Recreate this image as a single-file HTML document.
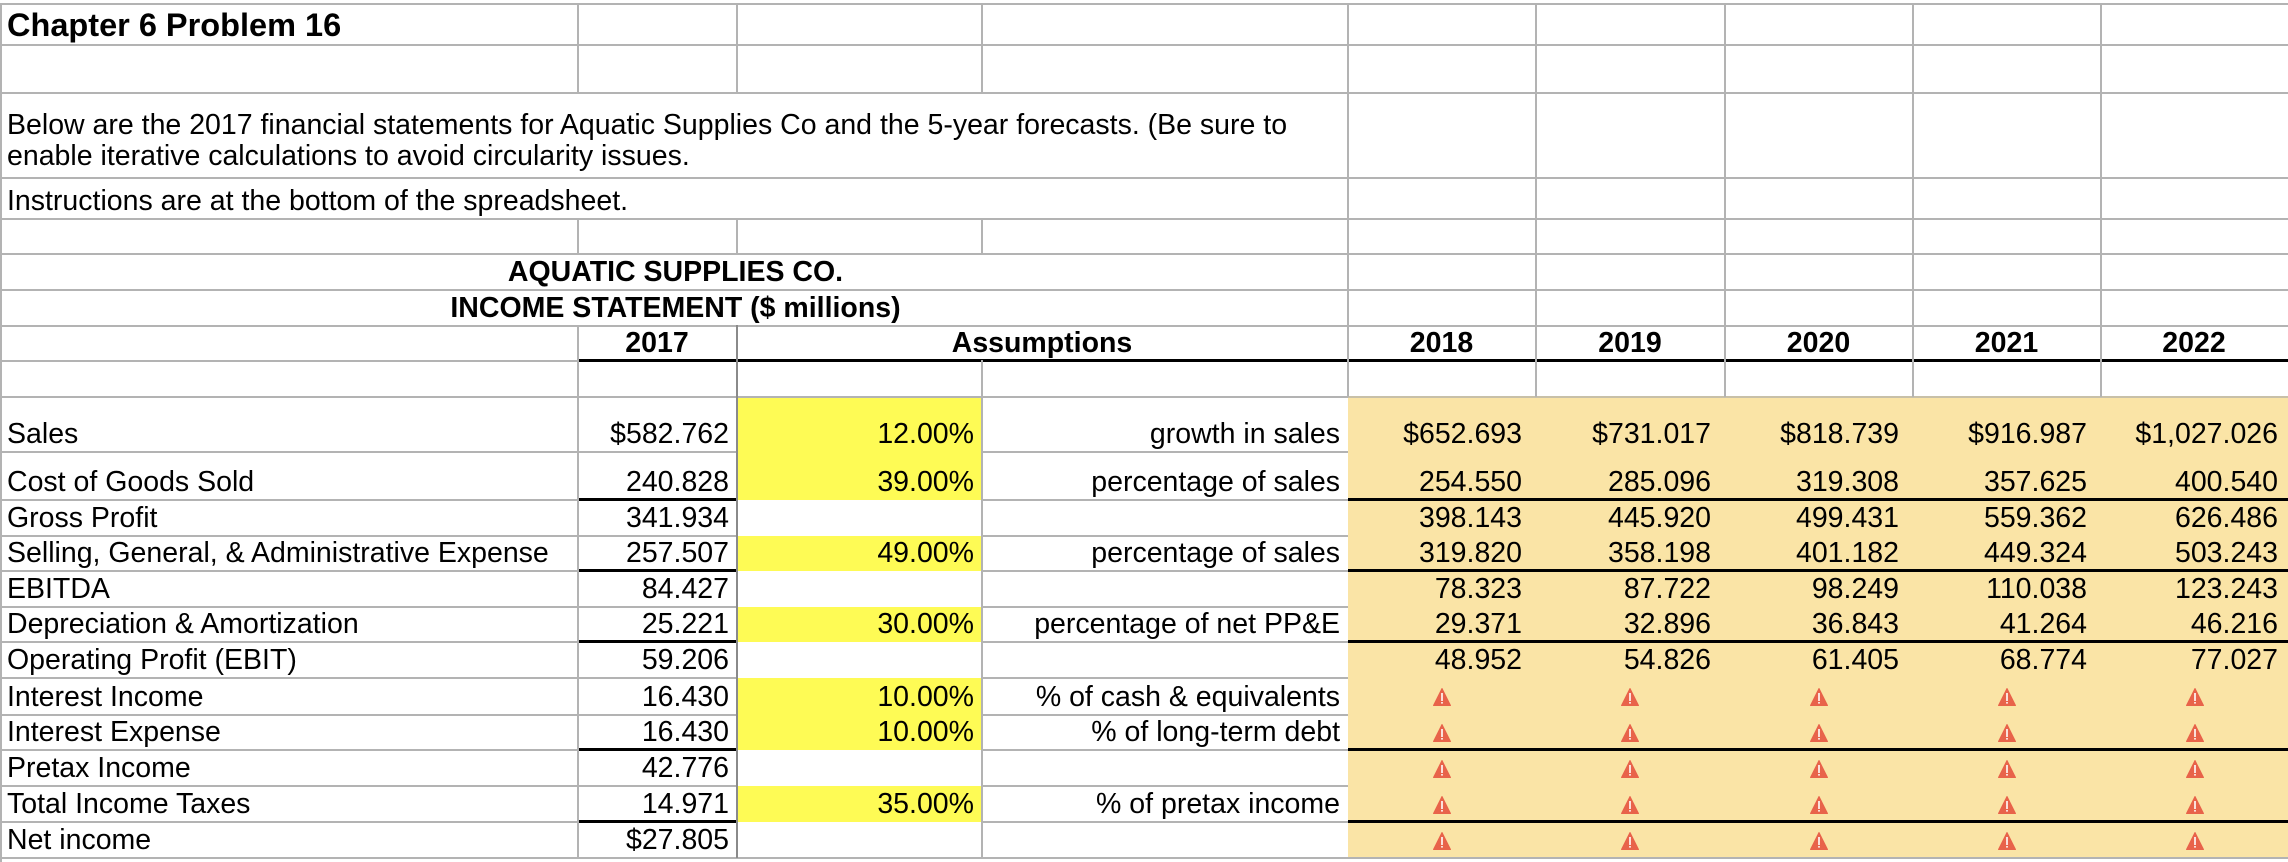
<!DOCTYPE html>
<html><head><meta charset="utf-8"><style>
body{margin:0;width:2288px;height:862px;background:#fff;position:relative;overflow:hidden;font-family:"Liberation Sans",Arial,sans-serif;color:#000}
div{position:absolute;box-sizing:border-box}
.h{height:2px;background:#b3b3b3}
.k{height:3px;background:#000}
.v{width:2px;background:#b3b3b3}
.c{display:flex;align-items:flex-end;white-space:nowrap;font-size:28.5px;line-height:30px;padding:0 8px 3px 7px}
.r{justify-content:flex-end}
.m{justify-content:center}
.b{font-weight:bold}
.y{background:#fefb55}
</style></head><body>
<div style="left:1348px;top:397px;width:940px;height:461px;background:#fae4a6"></div>
<div class="y" style="left:737px;top:397px;width:245px;height:103px"></div>
<div class="y" style="left:737px;top:536px;width:245px;height:35px"></div>
<div class="y" style="left:737px;top:607px;width:245px;height:35px"></div>
<div class="y" style="left:737px;top:678px;width:245px;height:72px"></div>
<div class="y" style="left:737px;top:786px;width:245px;height:36px"></div>

<div class="h" style="left:0;top:3px;width:2288px"></div>
<div class="h" style="left:0;top:44px;width:2288px"></div>
<div class="h" style="left:0;top:92px;width:2288px"></div>
<div class="h" style="left:0;top:177px;width:2288px"></div>
<div class="h" style="left:0;top:218px;width:2288px"></div>
<div class="h" style="left:0;top:253px;width:2288px"></div>
<div class="h" style="left:0;top:289px;width:2288px"></div>
<div class="h" style="left:0;top:325px;width:2288px"></div>
<div class="h" style="left:0;top:360px;width:578px"></div>
<div class="k" style="left:578px;top:359px;width:1710px"></div>
<div class="h" style="left:0;top:396px;width:1348px"></div>
<div class="h" style="left:1348px;top:396px;width:940px;background:#c8c0a8"></div>

<div class="h" style="left:0;top:451px;width:737px"></div><div class="h" style="left:982px;top:451px;width:366px"></div>
<div class="h" style="left:0;top:499px;width:578px"></div><div class="k" style="left:578px;top:498px;width:159px"></div><div class="h" style="left:982px;top:499px;width:366px"></div><div class="k" style="left:1348px;top:498px;width:940px"></div>
<div class="h" style="left:0;top:535px;width:737px"></div><div class="h" style="left:982px;top:535px;width:366px"></div>
<div class="h" style="left:0;top:570px;width:578px"></div><div class="k" style="left:578px;top:569px;width:159px"></div><div class="h" style="left:982px;top:570px;width:366px"></div><div class="k" style="left:1348px;top:569px;width:940px"></div>
<div class="h" style="left:0;top:606px;width:737px"></div><div class="h" style="left:982px;top:606px;width:366px"></div>
<div class="h" style="left:0;top:641px;width:578px"></div><div class="k" style="left:578px;top:640px;width:159px"></div><div class="h" style="left:982px;top:641px;width:366px"></div><div class="k" style="left:1348px;top:640px;width:940px"></div>
<div class="h" style="left:0;top:677px;width:737px"></div><div class="h" style="left:982px;top:677px;width:366px"></div>
<div class="h" style="left:0;top:714px;width:737px"></div><div class="h" style="left:982px;top:714px;width:366px"></div>
<div class="h" style="left:0;top:749px;width:578px"></div><div class="k" style="left:578px;top:748px;width:159px"></div><div class="h" style="left:982px;top:749px;width:366px"></div><div class="k" style="left:1348px;top:748px;width:940px"></div>
<div class="h" style="left:0;top:785px;width:737px"></div><div class="h" style="left:982px;top:785px;width:366px"></div>
<div class="h" style="left:0;top:821px;width:578px"></div><div class="k" style="left:578px;top:820px;width:159px"></div><div class="h" style="left:982px;top:821px;width:366px"></div><div class="k" style="left:1348px;top:820px;width:940px"></div>
<div class="h" style="left:0;top:857px;width:2288px"></div>

<div class="v" style="left:0;top:3px;height:859px"></div>
<div class="v" style="left:577px;top:3px;height:90px"></div>
<div class="v" style="left:736px;top:3px;height:90px"></div>
<div class="v" style="left:981px;top:3px;height:90px"></div>
<div class="v" style="left:577px;top:218px;height:36px"></div>
<div class="v" style="left:736px;top:218px;height:36px"></div>
<div class="v" style="left:981px;top:218px;height:36px"></div>
<div class="v" style="left:577px;top:325px;height:533px"></div>
<div class="v" style="left:736px;top:325px;height:533px;background:#8a8a8a"></div>
<div class="v" style="left:981px;top:360px;height:498px"></div>
<div class="v" style="left:1347px;top:3px;height:394px"></div>
<div class="v" style="left:1535px;top:3px;height:394px"></div>
<div class="v" style="left:1724px;top:3px;height:394px"></div>
<div class="v" style="left:1912px;top:3px;height:394px"></div>
<div class="v" style="left:2100px;top:3px;height:394px"></div>

<div class="c b" style="left:0;top:4px;height:41px;font-size:32.5px;line-height:34px">Chapter 6 Problem 16</div>
<div class="c" style="left:0;top:100px;height:78px;display:block;padding-top:10px;line-height:31px">Below are the 2017 financial statements for Aquatic Supplies Co and the 5-year forecasts. (Be sure to<br>enable iterative calculations to avoid circularity issues.</div>
<div class="c" style="left:0;top:178px;height:41px">Instructions are at the bottom of the spreadsheet.</div>
<div class="c b m" style="left:376px;top:254px;width:600px;height:36px">AQUATIC SUPPLIES CO.</div>
<div class="c b m" style="left:376px;top:290px;width:600px;height:36px">INCOME STATEMENT ($ millions)</div>
<div class="c b m" style="left:578px;top:326px;width:159px;height:35px">2017</div>
<div class="c b m" style="left:737px;top:326px;width:611px;height:35px">Assumptions</div>
<div class="c b m" style="left:1348px;top:326px;width:188px;height:35px">2018</div>
<div class="c b m" style="left:1536px;top:326px;width:189px;height:35px">2019</div>
<div class="c b m" style="left:1725px;top:326px;width:188px;height:35px">2020</div>
<div class="c b m" style="left:1913px;top:326px;width:188px;height:35px">2021</div>
<div class="c b m" style="left:2101px;top:326px;width:187px;height:35px">2022</div>

<div class="c" style="left:0;top:397px;width:578px;height:55px">Sales</div>
<div class="c" style="left:0;top:452px;width:578px;height:48px">Cost of Goods Sold</div>
<div class="c" style="left:0;top:500px;width:578px;height:36px">Gross Profit</div>
<div class="c" style="left:0;top:536px;width:578px;height:35px">Selling, General, &amp; Administrative Expense</div>
<div class="c" style="left:0;top:571px;width:578px;height:36px">EBITDA</div>
<div class="c" style="left:0;top:607px;width:578px;height:35px">Depreciation &amp; Amortization</div>
<div class="c" style="left:0;top:642px;width:578px;height:36px">Operating Profit (EBIT)</div>
<div class="c" style="left:0;top:678px;width:578px;height:37px">Interest Income</div>
<div class="c" style="left:0;top:715px;width:578px;height:35px">Interest Expense</div>
<div class="c" style="left:0;top:750px;width:578px;height:36px">Pretax Income</div>
<div class="c" style="left:0;top:786px;width:578px;height:36px">Total Income Taxes</div>
<div class="c" style="left:0;top:822px;width:578px;height:36px">Net income</div>

<div class="c r" style="left:578px;top:397px;width:159px;height:55px">$582.762</div>
<div class="c r" style="left:578px;top:452px;width:159px;height:48px">240.828</div>
<div class="c r" style="left:578px;top:500px;width:159px;height:36px">341.934</div>
<div class="c r" style="left:578px;top:536px;width:159px;height:35px">257.507</div>
<div class="c r" style="left:578px;top:571px;width:159px;height:36px">84.427</div>
<div class="c r" style="left:578px;top:607px;width:159px;height:35px">25.221</div>
<div class="c r" style="left:578px;top:642px;width:159px;height:36px">59.206</div>
<div class="c r" style="left:578px;top:678px;width:159px;height:37px">16.430</div>
<div class="c r" style="left:578px;top:715px;width:159px;height:35px">16.430</div>
<div class="c r" style="left:578px;top:750px;width:159px;height:36px">42.776</div>
<div class="c r" style="left:578px;top:786px;width:159px;height:36px">14.971</div>
<div class="c r" style="left:578px;top:822px;width:159px;height:36px">$27.805</div>

<div class="c r" style="left:737px;top:397px;width:245px;height:55px">12.00%</div>
<div class="c r" style="left:737px;top:452px;width:245px;height:48px">39.00%</div>
<div class="c r" style="left:737px;top:536px;width:245px;height:35px">49.00%</div>
<div class="c r" style="left:737px;top:607px;width:245px;height:35px">30.00%</div>
<div class="c r" style="left:737px;top:678px;width:245px;height:37px">10.00%</div>
<div class="c r" style="left:737px;top:715px;width:245px;height:35px">10.00%</div>
<div class="c r" style="left:737px;top:786px;width:245px;height:36px">35.00%</div>

<div class="c r" style="left:982px;top:397px;width:366px;height:55px">growth in sales</div>
<div class="c r" style="left:982px;top:452px;width:366px;height:48px">percentage of sales</div>
<div class="c r" style="left:982px;top:536px;width:366px;height:35px">percentage of sales</div>
<div class="c r" style="left:982px;top:607px;width:366px;height:35px">percentage of net PP&amp;E</div>
<div class="c r" style="left:982px;top:678px;width:366px;height:37px">% of cash &amp; equivalents</div>
<div class="c r" style="left:982px;top:715px;width:366px;height:35px">% of long-term debt</div>
<div class="c r" style="left:982px;top:786px;width:366px;height:36px">% of pretax income</div>

<div class="c r" style="left:1348px;top:397px;width:188px;height:55px;padding-right:14px">$652.693</div>
<div class="c r" style="left:1536px;top:397px;width:189px;height:55px;padding-right:14px">$731.017</div>
<div class="c r" style="left:1725px;top:397px;width:188px;height:55px;padding-right:14px">$818.739</div>
<div class="c r" style="left:1913px;top:397px;width:188px;height:55px;padding-right:14px">$916.987</div>
<div class="c r" style="left:2101px;top:397px;width:187px;height:55px;padding-right:10px">$1,027.026</div>

<div class="c r" style="left:1348px;top:452px;width:188px;height:48px;padding-right:14px">254.550</div>
<div class="c r" style="left:1536px;top:452px;width:189px;height:48px;padding-right:14px">285.096</div>
<div class="c r" style="left:1725px;top:452px;width:188px;height:48px;padding-right:14px">319.308</div>
<div class="c r" style="left:1913px;top:452px;width:188px;height:48px;padding-right:14px">357.625</div>
<div class="c r" style="left:2101px;top:452px;width:187px;height:48px;padding-right:10px">400.540</div>

<div class="c r" style="left:1348px;top:500px;width:188px;height:36px;padding-right:14px">398.143</div>
<div class="c r" style="left:1536px;top:500px;width:189px;height:36px;padding-right:14px">445.920</div>
<div class="c r" style="left:1725px;top:500px;width:188px;height:36px;padding-right:14px">499.431</div>
<div class="c r" style="left:1913px;top:500px;width:188px;height:36px;padding-right:14px">559.362</div>
<div class="c r" style="left:2101px;top:500px;width:187px;height:36px;padding-right:10px">626.486</div>

<div class="c r" style="left:1348px;top:536px;width:188px;height:35px;padding-right:14px">319.820</div>
<div class="c r" style="left:1536px;top:536px;width:189px;height:35px;padding-right:14px">358.198</div>
<div class="c r" style="left:1725px;top:536px;width:188px;height:35px;padding-right:14px">401.182</div>
<div class="c r" style="left:1913px;top:536px;width:188px;height:35px;padding-right:14px">449.324</div>
<div class="c r" style="left:2101px;top:536px;width:187px;height:35px;padding-right:10px">503.243</div>

<div class="c r" style="left:1348px;top:571px;width:188px;height:36px;padding-right:14px">78.323</div>
<div class="c r" style="left:1536px;top:571px;width:189px;height:36px;padding-right:14px">87.722</div>
<div class="c r" style="left:1725px;top:571px;width:188px;height:36px;padding-right:14px">98.249</div>
<div class="c r" style="left:1913px;top:571px;width:188px;height:36px;padding-right:14px">110.038</div>
<div class="c r" style="left:2101px;top:571px;width:187px;height:36px;padding-right:10px">123.243</div>

<div class="c r" style="left:1348px;top:607px;width:188px;height:35px;padding-right:14px">29.371</div>
<div class="c r" style="left:1536px;top:607px;width:189px;height:35px;padding-right:14px">32.896</div>
<div class="c r" style="left:1725px;top:607px;width:188px;height:35px;padding-right:14px">36.843</div>
<div class="c r" style="left:1913px;top:607px;width:188px;height:35px;padding-right:14px">41.264</div>
<div class="c r" style="left:2101px;top:607px;width:187px;height:35px;padding-right:10px">46.216</div>

<div class="c r" style="left:1348px;top:642px;width:188px;height:36px;padding-right:14px">48.952</div>
<div class="c r" style="left:1536px;top:642px;width:189px;height:36px;padding-right:14px">54.826</div>
<div class="c r" style="left:1725px;top:642px;width:188px;height:36px;padding-right:14px">61.405</div>
<div class="c r" style="left:1913px;top:642px;width:188px;height:36px;padding-right:14px">68.774</div>
<div class="c r" style="left:2101px;top:642px;width:187px;height:36px;padding-right:10px">77.027</div>

<svg width="0" height="0" style="position:absolute"><defs><g id="wi"><path d="M9 0.5 L17.5 17.5 L0.5 17.5 Z" fill="#e8634a" stroke="#e8634a" stroke-linejoin="round"/><rect x="8.2" y="5" width="1.6" height="8" fill="#fff"/><rect x="8.2" y="14" width="1.6" height="1.6" fill="#fff"/></g></defs></svg>
<div style="left:1433px;top:688px"><svg width="18" height="18"><use href="#wi"/></svg></div>
<div style="left:1621px;top:688px"><svg width="18" height="18"><use href="#wi"/></svg></div>
<div style="left:1810px;top:688px"><svg width="18" height="18"><use href="#wi"/></svg></div>
<div style="left:1998px;top:688px"><svg width="18" height="18"><use href="#wi"/></svg></div>
<div style="left:2186px;top:688px"><svg width="18" height="18"><use href="#wi"/></svg></div>

<div style="left:1433px;top:724px"><svg width="18" height="18"><use href="#wi"/></svg></div>
<div style="left:1621px;top:724px"><svg width="18" height="18"><use href="#wi"/></svg></div>
<div style="left:1810px;top:724px"><svg width="18" height="18"><use href="#wi"/></svg></div>
<div style="left:1998px;top:724px"><svg width="18" height="18"><use href="#wi"/></svg></div>
<div style="left:2186px;top:724px"><svg width="18" height="18"><use href="#wi"/></svg></div>

<div style="left:1433px;top:760px"><svg width="18" height="18"><use href="#wi"/></svg></div>
<div style="left:1621px;top:760px"><svg width="18" height="18"><use href="#wi"/></svg></div>
<div style="left:1810px;top:760px"><svg width="18" height="18"><use href="#wi"/></svg></div>
<div style="left:1998px;top:760px"><svg width="18" height="18"><use href="#wi"/></svg></div>
<div style="left:2186px;top:760px"><svg width="18" height="18"><use href="#wi"/></svg></div>

<div style="left:1433px;top:796px"><svg width="18" height="18"><use href="#wi"/></svg></div>
<div style="left:1621px;top:796px"><svg width="18" height="18"><use href="#wi"/></svg></div>
<div style="left:1810px;top:796px"><svg width="18" height="18"><use href="#wi"/></svg></div>
<div style="left:1998px;top:796px"><svg width="18" height="18"><use href="#wi"/></svg></div>
<div style="left:2186px;top:796px"><svg width="18" height="18"><use href="#wi"/></svg></div>

<div style="left:1433px;top:832px"><svg width="18" height="18"><use href="#wi"/></svg></div>
<div style="left:1621px;top:832px"><svg width="18" height="18"><use href="#wi"/></svg></div>
<div style="left:1810px;top:832px"><svg width="18" height="18"><use href="#wi"/></svg></div>
<div style="left:1998px;top:832px"><svg width="18" height="18"><use href="#wi"/></svg></div>
<div style="left:2186px;top:832px"><svg width="18" height="18"><use href="#wi"/></svg></div>
</body></html>
